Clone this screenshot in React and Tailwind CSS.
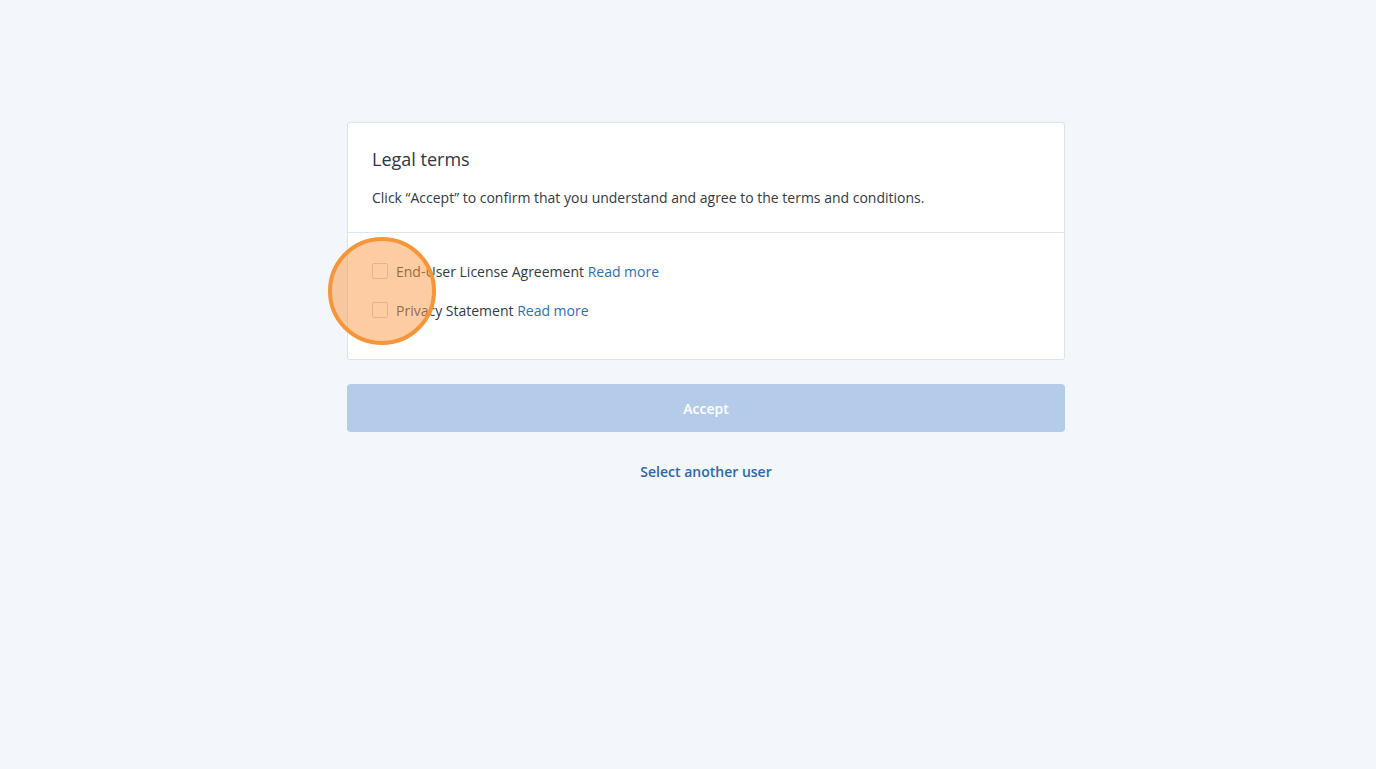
export default function App() {
  return (
    <div
      className="relative min-h-screen bg-[#f3f6fb] pl-9 text-[#333a44]"
      style={{ fontFamily: '"Open Sans", "Noto Sans", sans-serif' }}
    >
      <div className="flex justify-center pt-[122px]">
        <div className="w-[718px]">
          <div className="rounded-[3px] border border-[#dde3ea] bg-white">
            <div className="border-b border-[#e1e6ed] px-6 pt-6 pb-6">
              <h1 className="text-[18px] leading-6 text-[#2f3640]">Legal terms</h1>
              <p className="mt-[17px] text-[14px] leading-5 text-[#333a44]">
                Click “Accept” to confirm that you understand and agree to the terms and conditions.
              </p>
            </div>
            <div className="flex flex-col gap-[19px] px-6 pt-[28px] pb-[39px]">
              <label className="flex h-5 items-center gap-2 text-[14px]">
                <span className="h-4 w-4 rounded-[2px] border border-[#c9ced5] bg-white" />
                <span>
                  End-User License Agreement{" "}
                  <a className="text-[#2d6fb5]">Read more</a>
                </span>
              </label>
              <label className="flex h-5 items-center gap-2 text-[14px]">
                <span className="h-4 w-4 rounded-[2px] border border-[#c9ced5] bg-white" />
                <span>
                  Privacy Statement <a className="text-[#2d6fb5]">Read more</a>
                </span>
              </label>
            </div>
          </div>
          <button className="mt-6 h-12 w-full rounded-[4px] bg-[#b5cbea] text-[14px] font-semibold text-white">
            Accept
          </button>
          <div className="mt-[27px] text-center">
            <a className="text-[14px] leading-5 font-semibold text-[#2f68a8]">Select another user</a>
          </div>
        </div>
      </div>
      <div className="pointer-events-none absolute top-[237px] left-[328px] h-[108px] w-[108px] rounded-full border-4 border-[#f7953a] bg-[#fb9a45]/50" />
    </div>
  );
}
